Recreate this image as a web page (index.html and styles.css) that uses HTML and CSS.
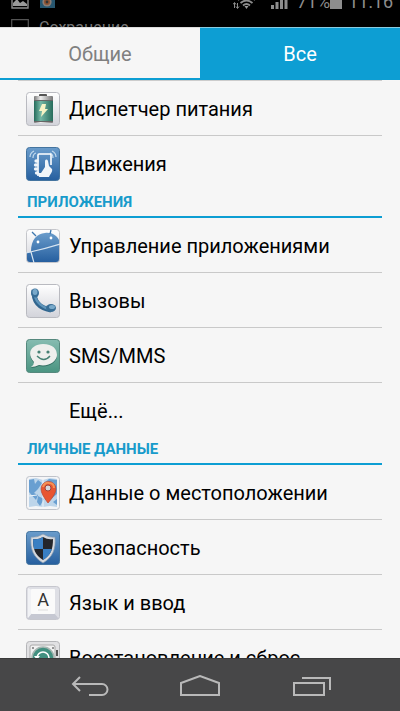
FILE: index.html
```html
<!DOCTYPE html>
<html lang="ru">
<head>
<meta charset="utf-8">
<meta name="viewport" content="width=device-width, initial-scale=1">
<title>Настройки</title>
<link rel="stylesheet" href="styles.css">
</head>
<body>
<header class="status">
  <div class="status-row">
    <svg class="st-picture" width="18" height="18" viewBox="0 0 18 18"><path d="M1 1h16v16H1z" fill="none" stroke="#8d8d8d" stroke-width="1.4"/><path d="M2 15v-3l4-4 3 4 3-2 4 3v2z" fill="#9a9a9a"/></svg>
    <svg class="st-camera" width="15" height="16" viewBox="0 0 15 16"><rect width="15" height="15" fill="#27566f"/><circle cx="7" cy="9" r="4.600" fill="#8a7c75"/><circle cx="7" cy="9" r="3" fill="#8f5230"/><circle cx="7" cy="9" r="1.400" fill="#333"/></svg>
    <span class="spacer"></span>
    <svg class="st-wifi" width="22" height="16" viewBox="0 0 22 16"><g fill="none" stroke="#8d8d8d"><path d="M1.500 15v-5M4.500 10v5M0 11.500l1.500-2 1.500 2M3 13.500l1.500 2 1.500-2" stroke-width="1"/><path d="M5 7q8.500-7 17 0M7.500 10q6-5 12 0M10 12.500q3.500-3 7 0" stroke-width="1.800"/></g><path d="M11.500 13h4l-2 3z" fill="#999"/></svg>
    <svg class="st-signal" width="17" height="17" viewBox="0 0 17 17" fill="#8d8d8d"><path d="M0 13h3v4H0zM4.500 10h3v7h-3zM9 6h3v11H9zM13.500 2h3v15h-3z"/></svg>
    <span class="st-text">71%</span>
    <svg class="st-battery" width="12" height="17" viewBox="0 0 12 17"><path d="M0 2h3V0h6v2h3v15H0z" fill="#8d8d8d"/></svg>
    <span class="st-text st-time">11:16</span>
  </div>
  <div class="notice">
    <svg width="18" height="18" viewBox="0 0 18 18"><path d="M.7.7h16.600v16.600H.7z" fill="none" stroke="#555" stroke-width="1.200"/></svg>
    <span>Сохранение</span>
  </div>
</header>

<nav class="tabs">
  <button class="tab" type="button">Общие</button>
  <button class="tab tab-active" type="button">Все</button>
</nav>

<main class="list">
  <section class="group group-first">
    <a class="row" href="#power">
      <svg class="icon" viewBox="0 0 34 34"><defs><linearGradient id="tile" x1="0" y1="0" x2="0" y2="1"><stop offset="0" stop-color="#fff"/><stop offset="1" stop-color="#d2d3da"/></linearGradient><linearGradient id="blue" x1="0" y1="0" x2="0" y2="1"><stop offset="0" stop-color="#6a9ccb"/><stop offset="1" stop-color="#265f9f"/></linearGradient><linearGradient id="green" x1="0" y1="0" x2="0" y2="1"><stop offset="0" stop-color="#87bcb1"/><stop offset="1" stop-color="#4a9481"/></linearGradient><linearGradient id="cell"><stop offset="0" stop-color="#256b5b"/><stop offset=".35" stop-color="#74b7a5"/><stop offset="1" stop-color="#286c5c"/></linearGradient><linearGradient id="metal"><stop offset="0" stop-color="#777"/><stop offset=".35" stop-color="#eee"/><stop offset="1" stop-color="#777"/></linearGradient></defs><rect x=".5" y=".5" width="33" height="33" rx="3" fill="url(#tile)" stroke="#b9bac0"/><rect x="13" y="2" width="8" height="3" rx="1" fill="#555"/><rect x="8" y="4" width="19" height="27" rx="1" fill="url(#metal)"/><rect x="8" y="9" width="19" height="20" fill="url(#cell)"/><path d="M8 8.500h19M8 29.500h19" stroke="#666"/><path d="M16 12h4l-1 5h3l-7 8 1-6h-3z" fill="#f7f3c5"/></svg>
      <span>Диспетчер питания</span>
    </a>
    <a class="row" href="#motion">
      <svg class="icon" viewBox="0 0 34 34"><rect x=".5" y=".5" width="33" height="33" rx="3" fill="url(#blue)" stroke="#44749f"/><g fill="none" stroke="#c4dbee" stroke-width="1.200"><path d="M8 4q-4 2-4 6M10 6q-3 1-3 5M26 4q4 2 4 6M24 6q3 1 3 5"/></g><path d="M12 29V8q0-1 1-1h11q1 0 1 1v10" fill="none" stroke="#fff" stroke-width="1.600"/><g fill="#f1f5fa"><ellipse cx="10.500" cy="14" rx="2.200" ry="1.700"/><ellipse cx="10" cy="18" rx="2.200" ry="1.700"/><ellipse cx="10" cy="22" rx="2.200" ry="1.700"/><ellipse cx="11" cy="26" rx="2.200" ry="1.700"/><path d="M12 26h3l4-6v-5c0-3 2-3 3-1l1 5 3 3c1 3-2 5-3 8H13z"/></g></svg>
      <span>Движения</span>
    </a>
  </section>

  <section class="group">
    <h2>ПРИЛОЖЕНИЯ</h2>
    <a class="row" href="#apps">
      <svg class="icon" viewBox="0 0 34 34"><rect x=".5" y=".5" width="33" height="33" rx="3" fill="url(#tile)" stroke="#c5c6cb"/><path d="M5 23C5 10 11 5 19 4c7-1 12 3 14 7v19q0 3-3 3H4q-3 0-3-3v-6z" fill="url(#blue)"/><path d="M10 7L6 3M24 5l1-4" stroke="#3e78af" stroke-width="1.300"/><path d="M0 24q18-4 34-9M5 23l3 11" fill="none" stroke="#d8e5f1" stroke-width="1.200"/><circle cx="12" cy="13" r="1.400" fill="#fff"/><circle cx="25" cy="9" r="1.400" fill="#fff"/></svg>
      <span>Управление приложениями</span>
    </a>
    <a class="row" href="#calls">
      <svg class="icon" viewBox="0 0 34 34"><rect x=".5" y=".5" width="33" height="33" rx="3" fill="url(#tile)" stroke="#b9bac0"/><path d="M8 6q-1 17 17 20" fill="none" stroke="#31658e" stroke-width="5"/><path d="M8 7q1 14 15 18" fill="none" stroke="#5e94ba" stroke-width="2.500"/><ellipse cx="9" cy="9" rx="4" ry="4.500" fill="#376d96"/><ellipse cx="25" cy="24" rx="5" ry="4" fill="#376d96"/><ellipse cx="9" cy="8" rx="2.500" ry="3" fill="#79a9ca"/><ellipse cx="26" cy="23" rx="3" ry="2" fill="#79a9ca"/></svg>
      <span>Вызовы</span>
    </a>
    <a class="row" href="#sms">
      <svg class="icon" viewBox="0 0 34 34"><rect x=".5" y=".5" width="33" height="33" rx="3" fill="url(#green)" stroke="#55887d"/><path d="M5 29q3-2 3-5C-1 14 7 6 17 6s14 5 14 11-8 12-18 10q-4 2-8 2" fill="#336f62"/><path d="M5 28q3-2 3-5C-1 13 7 5 17 5s14 5 14 11-8 12-18 10q-4 2-8 2" fill="#efefed"/><circle cx="13" cy="13" r="1.600" fill="#478174"/><circle cx="22" cy="13" r="1.600" fill="#478174"/><path d="M11 17q7 7 13 0" fill="none" stroke="#478174" stroke-width="1.400"/></svg>
      <span>SMS/MMS</span>
    </a>
    <a class="row" href="#more">
      <span class="icon"></span>
      <span>Ещё...</span>
    </a>
  </section>

  <section class="group">
    <h2>ЛИЧНЫЕ ДАННЫЕ</h2>
    <a class="row" href="#location">
      <svg class="icon" viewBox="0 0 34 34"><rect x=".5" y=".5" width="33" height="33" rx="3" fill="#f4f5f7" stroke="#bfc3ca"/><path d="M3 3l7-1 7 2 7-2 7 1v28l-7-1-7 1-7-1-7 1z" fill="#bdd5ea"/><path d="M3 4l5-1 1 5 3-4 4 3-4 6-4 4 4 2-2 5-7-8zM18 7l5-4 8 1v14l-6 5-4-7-5-2zM12 20l6 3-4 7-3-4zM27 26l4-3v6z" fill="#699fd1"/><path d="M17 4v27M3 20l8-1" stroke="#eef5fa"/><path d="M22 27q-7-9-7-14a7.500 7.500 0 0 1 15 0q0 5-8 14" fill="#e85532" stroke="#b74631" stroke-width=".7"/><path d="M17 11q2-5 6-4 5 0 5 5" fill="none" stroke="#f59255" stroke-width="2"/><circle cx="22" cy="12" r="3" fill="#d7d6d9" stroke="#9f453a"/></svg>
      <span>Данные о местоположении</span>
    </a>
    <a class="row" href="#security">
      <svg class="icon" viewBox="0 0 34 34"><rect x=".5" y=".5" width="33" height="33" rx="3" fill="url(#blue)" stroke="#44749f"/><path d="M17 3q6 4 12 3c1 12-2 20-12 26C7 26 4 18 5 6q6 1 12-3" fill="#d5d8dd" stroke="#8298ae" stroke-width=".7"/><path d="M17 6q5 3 10 2c0 10-2 16-10 21C9 24 7 18 7 8q5 1 10-2" fill="#24262b"/><path d="M17 6v12H8Q7 14 7 8q5 1 10-2M17 18h9q-2 7-9 11z" fill="#397fc3"/></svg>
      <span>Безопасность</span>
    </a>
    <a class="row" href="#language">
      <svg class="icon" viewBox="0 0 34 34"><rect x=".5" y=".5" width="33" height="33" rx="3" fill="#dedfe5" stroke="#c6c7ce"/><path d="M1 33l5-6h22l5 6z" fill="#c6c8d2"/><path d="M2 2l4 2v23l-4 5z" fill="#f1f2f5"/><rect x="5" y="3" width="24" height="25" rx="1" fill="#fafafa"/><text class="key" x="17" y="20" text-anchor="middle">A</text><path d="M12 24h10" stroke="#ddd"/></svg>
      <span>Язык и ввод</span>
    </a>
    <a class="row" href="#reset">
      <svg class="icon" viewBox="0 0 34 34"><rect x=".5" y=".5" width="33" height="33" rx="3" fill="#e1e1e3" stroke="#b4b5b8"/><rect x="4" y="4" width="25" height="27" rx="2" fill="#f1f1f1" stroke="#aaa"/><circle cx="17" cy="17" r="11" fill="#429080" stroke="#a7b6b2" stroke-width="1.500"/><path d="M11 17a6 6 0 1 1 6 6" fill="none" stroke="#fff" stroke-width="1.600"/><path d="M8 15h6l-3 4z" fill="#fff"/><path d="M30 9h2v6h-2z" fill="#555"/><circle cx="7" cy="7" r="1" fill="#777"/><circle cx="27" cy="7" r="1" fill="#777"/></svg>
      <span>Восстановление и сброс</span>
    </a>
  </section>
</main>

<footer class="navbar">
  <button type="button" aria-label="Назад"><svg width="40" height="24" viewBox="0 0 40 24"><path d="M11 2L4 9l7 7M4 9h29a5.500 5.500 0 0 1 0 11H20"/></svg></button>
  <button type="button" aria-label="Домой"><svg width="42" height="24" viewBox="0 0 42 24"><path d="M2 20V8l19-7 19 7v12z"/></svg></button>
  <button type="button" aria-label="Недавние"><svg width="40" height="24" viewBox="0 0 40 24"><path d="M3 8h30v12H3zM11 3h28v12"/></svg></button>
</footer>
</body>
</html>
```
FILE: styles.css
```css
* {
  box-sizing: border-box;
}

body {
  margin: 0;
  height: 100vh;
  display: flex;
  flex-direction: column;
  overflow: hidden;
  background: #f6f6f6;
  color: #000;
  font-family: Roboto, "Noto Sans", sans-serif;
  font-size: 20px;
}

button {
  margin: 0;
  padding: 0;
  border: 0;
  background: none;
  font: inherit;
}

.status {
  flex: none;
  height: 27px;
  overflow: hidden;
  background: #000;
  color: #8d8d8d;
}

.status-row {
  display: flex;
  align-items: flex-end;
  height: 9px;
  padding: 0 7px 0 11px;
}

.status-row svg {
  flex: none;
}

.st-camera {
  margin-left: 11px;
}

.spacer {
  flex: 1;
}

.st-signal {
  margin: 0 9px 0 16px;
}

.st-text {
  font-size: 18px;
  line-height: 14px;
}

.st-time {
  margin-left: 6px;
}

.notice {
  display: flex;
  gap: 10px;
  margin-top: 10px;
  padding-left: 11px;
  color: #777;
  font-size: 16px;
  line-height: 18px;
}

.tabs {
  flex: none;
  display: flex;
  height: 53px;
  border-bottom: 2px solid #0d9ed3;
}

.tab {
  flex: 1;
  padding-top: 2px;
  border-top: 1px solid #ddd;
  background: #f6f6f6;
  color: #808080;
}

.tab-active {
  border-color: #8accdf;
  background: #0d9ed3;
  color: #fff;
}

.list {
  flex: 1;
  min-height: 0;
  overflow: hidden;
  padding: 0 18px;
}

.group-first {
  border-top: 1px solid #ccc;
}

.group h2 {
  margin: 0;
  height: 28px;
  padding-left: 9px;
  border-bottom: 2px solid #0d9ed3;
  color: #189bcb;
  font-size: 15px;
  font-weight: 700;
  line-height: 24px;
}

.row {
  display: flex;
  align-items: center;
  gap: 9px;
  height: 55px;
  padding: 2px 8px 0 8px;
  border-bottom: 1px solid #c9c9c9;
  color: inherit;
  text-decoration: none;
  white-space: nowrap;
}

.row:last-child {
  height: 54px;
  border-bottom: 0;
}

.icon {
  flex: none;
  width: 34px;
  height: 34px;
}

.key {
  font-size: 18px;
  fill: #333;
}

.navbar {
  flex: none;
  display: flex;
  justify-content: center;
  gap: 70px;
  height: 53px;
  border-top: 1px solid #3a3a3b;
  background: #474748;
}

.navbar button {
  display: flex;
  align-items: center;
  padding-top: 4px;
}

.navbar path {
  fill: none;
  stroke: #b9b9b9;
  stroke-width: 2;
}
```
